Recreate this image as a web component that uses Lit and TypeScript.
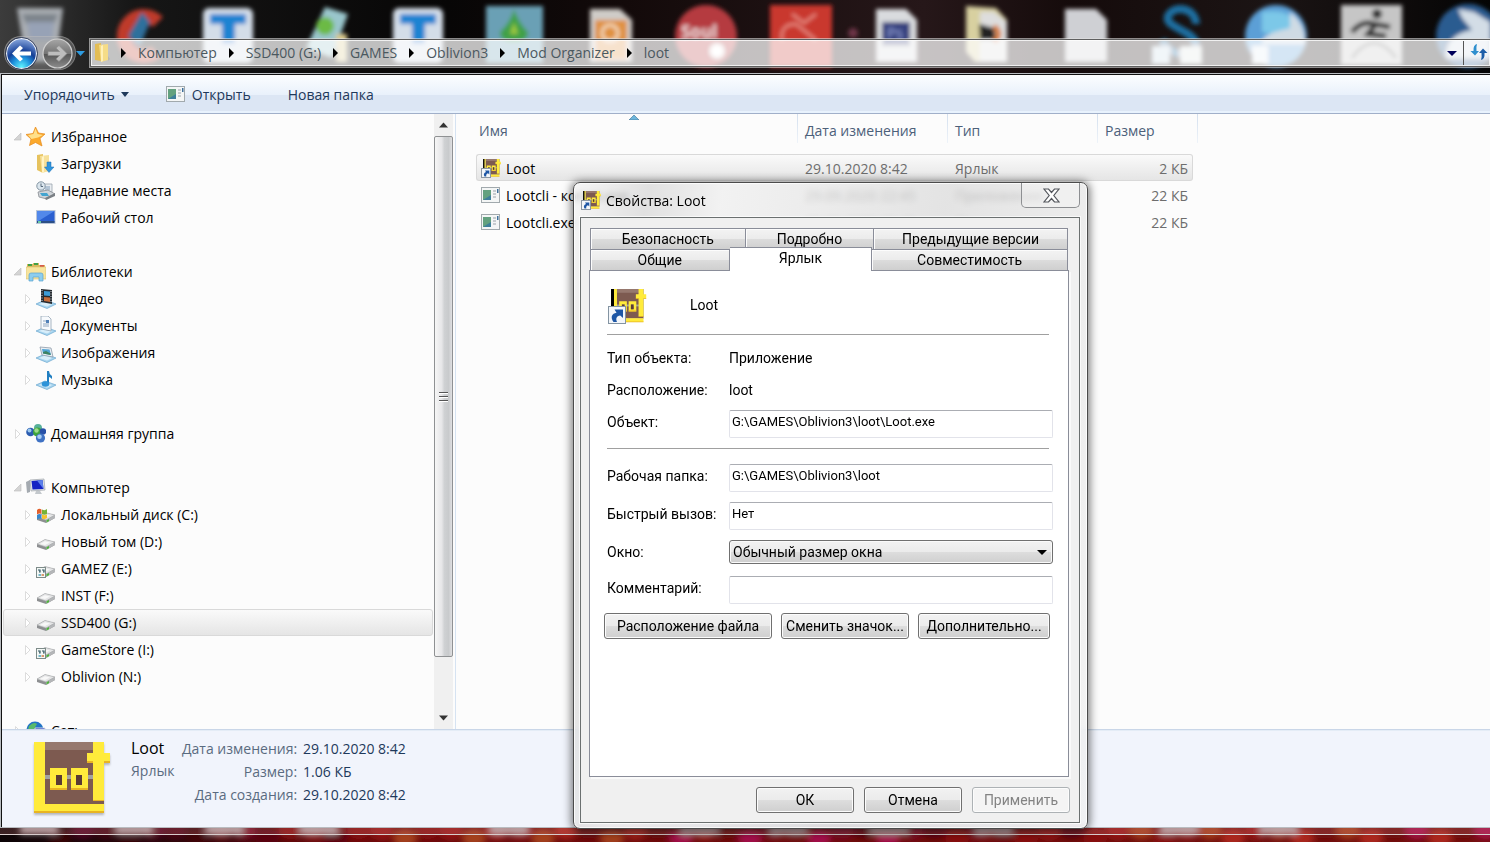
import { LitElement, html, css, svg, nothing } from "lit";
import { customElement, property } from "lit/decorators.js";
import { classMap } from "lit/directives/class-map.js";

const lootShapes = svg`
  <rect x="10" y="0" width="60" height="63" fill="#7d5a50"/>
  <rect x="10" y="0" width="50" height="8" fill="#96786e"/>
  <rect x="10" y="33" width="50" height="4" fill="#a3a3a0"/>
  <path d="M0 0H11V62H70V70H0Z" fill="#ffeb3b"/>
  <path d="M0 69H70V71H0ZM59 57H70V59H59Z" fill="#e8b423"/>
  <path d="M59 0H70V11H76V20H70V58H59V20H53V11H59Z" fill="#ffeb3b"/>
  <path d="M53 19H59V21H53ZM70 19H76V21H70Z" fill="#e8b423"/>
  <path fill-rule="evenodd" d="M16 26H33V48H16ZM22 33V43H28V33ZM37 26H54V48H37ZM42 33V43H48V33Z" fill="#ffeb3b"/>
  <path d="M16 46H33V48H16ZM37 46H54V48H37Z" fill="#e8b423"/>
  <path d="M22 33H28V43H22ZM42 33H48V43H42Z" fill="#5a3b34"/>`;

const drive = svg`
  <path d="M1 12L9 7.500L19 10V13L10 18L1 15Z" fill="#8d8f91"/>
  <path d="M1 12L9 7.500L19 10L10 15Z" fill="#e4e5e6" stroke="#a9abad" stroke-width=".6"/>
  <path d="M4 12L9 9.300L14 10.500L9 13Z" fill="#f8f8f8"/>
  <path d="M10 15L19 10V13L10 18Z" fill="#b4b6b8"/>
  <path d="M10.500 15.200L13 14V16L10.500 17.400Z" fill="#4db53a"/>`;

const plate = svg`
  <path d="M0 15L9 11L20 15L11 19.500Z" fill="#a9d5ef" stroke="#6ba7d0" stroke-width=".7"/>
  <path d="M3 15L9 12.500L16 15L11 17.500Z" fill="#d8eefa"/>`;

const icons: Record<string, unknown> = {
  star: svg`<path d="M9.500 0L12.500 6L19 7L14 11.500L16 19L9.500 15.500L3.500 18.500L5 12L0 7.500L7 6.500Z" fill="#fba92c" stroke="#e58a1d" stroke-width=".7"/><path d="M9.500 1.500L11.500 7L17 8L12 10.500L5.500 12L2 8L7.500 7Z" fill="#ffe08a"/>`,
  downloads: svg`<path d="M1 1L7 0V19L1 16Z" fill="#e6c25e"/><path d="M4 2L13 1V17L6 19Z" fill="#f6e09a"/><path d="M6 3L8 2V18L6 19Z" fill="#fff3c4"/><path d="M11 8H15V13H18L13 18.500L8.500 13H11Z" fill="#2f95dc" stroke="#1c6fb4" stroke-width=".5"/>`,
  recent: svg`<path d="M7 3H16V11H7Z" fill="#e9edf1" stroke="#9aa4ae" stroke-width=".8"/><path d="M9 6H14M9 8H14" stroke="#7d9bb8"/><circle cx="5" cy="5" r="4.200" fill="#dbe6ee" stroke="#8495a3"/><path d="M5 2.500V5.500H7" fill="none" stroke="#56697a"/><path d="M2 11L12 9L19 13L11 18L3 16Z" fill="#cfd4d9" stroke="#868c92" stroke-width=".8"/><path d="M4 12H11L13 15H6Z" fill="#44a4cf"/><path d="M9 17L19 12V15L10 19Z" fill="#7b8085"/>`,
  desktop: svg`<rect x="0" y="2" width="19.500" height="14" fill="#b8c5d8"/><rect x="1" y="3" width="17.500" height="11.500" fill="#2a5fd0"/><path d="M1 3H18.500L1 14Z" fill="#5288ea"/><rect x="1" y="13" width="17.500" height="2" fill="#2c4f86"/><rect x="2" y="13" width="3" height="2" fill="#6bcaa4"/>`,
  library: svg`<path d="M1 2H7V1H13V3H19V17H1Z" fill="#dab95f"/><path d="M2 3H6M8 2H12" stroke="#43a047" stroke-width="2"/><path d="M14 4H18" stroke="#d65a4a" stroke-width="2"/><path d="M0 5H20V17H0Z" fill="#f7e49e" stroke="#d9bf6c" stroke-width=".6"/><path d="M3 19V13Q3 11 5 11H15Q17 11 17 13V19H13V15H7V19Z" fill="#8dcdee" stroke="#5aa3cf" stroke-width=".7"/>`,
  video: svg`${plate}<path d="M5 0L16 1V15L5 13Z" fill="#262b30"/><path d="M8 2L14 2.500V7L8 6.500Z" fill="#3c9bd6"/><path d="M8 8L14 8.500V13L8 12Z" fill="#c46c3a"/><path d="M6 1V13M15 2V14" stroke="#cdd5db" stroke-dasharray="1 1.500"/>`,
  documents: svg`${plate}<path d="M5 0H12L15 3V15L5 13Z" fill="#f7fafd" stroke="#94a4b4" stroke-width=".8"/><path d="M7 5H10M7 8H13M7 10H13" stroke="#8da4be"/><path d="M10 4H13V7H10Z" fill="#4f7fb7"/>`,
  pictures: svg`${plate}<path d="M4 4L15 5L17 14L6 12Z" fill="#e9eff4" stroke="#8e9ba8" stroke-width=".8"/><path d="M6 6L13.500 6.500L15 12L7 10.500Z" fill="#4fa3d4"/><path d="M7 9L10 8L14.500 10.500V12L7 10.500Z" fill="#3c8261"/>`,
  music: svg`${plate}<path d="M11 1H13Q13 4 16 6V9Q14 7 13 7V14" fill="#217fc2"/><path d="M12 1V14" stroke="#217fc2" stroke-width="2"/><ellipse cx="9.500" cy="14" rx="3.800" ry="2.800" fill="#2d93d8"/>`,
  homegroup: svg`<circle cx="4.500" cy="8" r="4.300" fill="#2b5cb0"/><circle cx="3.500" cy="6.500" r="2" fill="#9cc8ee"/><circle cx="12" cy="4" r="4" fill="#57b09a"/><circle cx="11.500" cy="8" r="4.500" fill="#3fa53b"/><circle cx="10.500" cy="6.500" r="2.200" fill="#9fdc8b"/><circle cx="17" cy="7.500" r="3.200" fill="#2750a8"/><circle cx="14.500" cy="14" r="4.600" fill="#3f72c4"/><circle cx="13.500" cy="12.800" r="2.300" fill="#a8cdf3"/>`,
  computer: svg`<path d="M0 4L4 2V14L1 15Z" fill="#a4aab0"/><path d="M4 2L18 1L19 12L5 13Z" fill="#dfe3e7" stroke="#9da3a9" stroke-width=".7"/><path d="M5.500 3L16.500 2L17.500 11L6.500 11.500Z" fill="#1523c4"/><path d="M11 2.500L16.500 2L17.500 11Z" fill="#5c80ea"/><path d="M10 13H14L16 16H9Z" fill="#c3c8cc"/>`,
  system: svg`${drive}<path d="M1 5Q3 3 5.500 4.500V9Q3 8 1 9.500Z" fill="#e2602c"/><path d="M6 4.500Q9 6 11 4V9Q8.500 10.500 6 9Z" fill="#75b336"/><path d="M1 10Q3 8.500 5.500 9.500V14Q3 13 1 14.500Z" fill="#3787cc"/><path d="M6 9.500Q8.500 11 11 9.500V13Q8.500 15 6 13.500Z" fill="#f4c22e"/>`,
  drive,
  games: svg`${drive}<rect x=".5" y="8.500" width="9" height="10" fill="#f4f8f6" stroke="#7d8b89"/><path d="M2 11H4V13H3M6 11H8V13H7" fill="none" stroke="#2f5560" stroke-width="1.200"/><path d="M2.500 16H5" stroke="#48a0b8" stroke-width="1.500"/><path d="M5.500 16H8" stroke="#cf7a45" stroke-width="1.500"/>`,
  network: svg`<circle cx="9" cy="9" r="8.500" fill="#2374c6"/><path d="M3 5Q8 0 11 3Q8 7 9 10Q5 13 2 9Z" fill="#58b96a"/><path d="M9 7H19V16H9Z" fill="#1a33c4" stroke="#d5dce4"/>`,
  exe: svg`<rect x=".5" y="1.500" width="18" height="15" fill="#f4f6f6" stroke="#a1a9ad"/><rect x="2" y="4" width="8" height="10" fill="#3e7f9b"/><path d="M2 4H10V9L2 14Z" fill="#63a17f"/><path d="M12 5H15M12 8H15M12 11H15" stroke="#c7ccd0" stroke-width="2"/><rect x="16" y="3" width="1.500" height="4" fill="#3e6f9b"/>`,
  folder: svg`<path d="M1 1L7 0V18L1 17Z" fill="#e3bd55"/><path d="M5 2L14 1V17L7 19Z" fill="#f5dc87"/><path d="M7 3L9 2V18L7 19Z" fill="#fff0b8"/><path d="M14 13L16 16L14 18Z" fill="#b8b8b0"/>`,
  shortcut: svg`<g transform="translate(2 0) scale(.235 .25)">${lootShapes}</g><path d="M2 0H3.500V9H2Z" fill="#111"/><rect x=".5" y="9.500" width="9" height="9" fill="#f3f6f9" stroke="#8b97a3"/><path d="M3.500 17.500C2.200 15.500 3 13.500 5 13L4 11.500H8.300V15.500L7 14.300C5.300 14.800 5 16 5.300 17.500Z" fill="#1d56a5"/>`,
};

const icon = (name: string) => html`<svg class="icon" viewBox="0 0 20 20" aria-hidden="true">${icons[name]}</svg>`;

const iconStyles = css`
  .icon { width: 20px; height: 20px; flex: none; display: block; }
`;

/* Blurred desktop that shows through the glass of the window frame */
@customElement("desktop-wallpaper")
class DesktopWallpaper extends LitElement {
  static styles = css`
    :host { display: flex; flex-direction: column; justify-content: space-between; height: 100%; overflow: hidden; background: #120b0b; }
    svg { display: block; width: 100%; flex: none; }
    .top { height: 76px; }
    .bottom { height: 18px; }
  `;
  render() {
    const reds = ["#6d0a0c", "#9c1a14", "#7e0b2e", "#b02a1c", "#8a0e0e", "#a80f52", "#a8461c", "#5b0709"];
    const blobs = Array.from({ length: 64 }, (_, i) => {
      const x = 60 + i * 23;
      return svg`<ellipse cx=${x} cy=${i % 3 === 0 ? 14 : 6} rx="12" ry="9" fill=${reds[(i * 5 + (i >> 2)) % 8]} opacity=${x < 200 ? 0.35 : 0.9}/>`;
    });
    return html`
      <svg class="top" viewBox="0 0 1490 76" preserveAspectRatio="xMinYMin slice" aria-hidden="true">
        <defs>
          <filter id="soft" x="-5%" y="-20%" width="110%" height="140%"><feGaussianBlur stdDeviation="2.200"/></filter>
          <linearGradient id="sky"><stop offset="0" stop-color="#3c3c3c"/><stop offset=".09" stop-color="#161616"/><stop offset=".3" stop-color="#070606"/><stop offset=".42" stop-color="#130a0a"/><stop offset=".62" stop-color="#261719"/><stop offset=".72" stop-color="#150b0b"/><stop offset=".85" stop-color="#1b1414"/><stop offset="1" stop-color="#050505"/></linearGradient>
        </defs>
        <rect width="1490" height="76" fill="url(#sky)"/>
        <g filter="url(#soft)">
          <path d="M17 8H63L56 62H26Z" fill="#a9adb2"/><path d="M22 14H58L54 24H26Z" fill="#7d848b"/><path d="M27 22H54L52 40H30Z" fill="#97a2b6"/>
          <path d="M158 22A20 20 0 1 0 156 52" fill="none" stroke="#bf3a2b" stroke-width="14"/><path d="M128 36L142 12L150 22L140 46Z" fill="#2d6f9c"/>
          ${[203, 393].map((x) => svg`<rect x=${x} y="8" width="50" height="55" rx="6" fill="#d3dde8"/><path d=${`M${x + 7} 14H${x + 43}V24H${x + 32}V44H${x + 19}V24H${x + 7}Z`} fill="#1f83d2"/>`)}
          <path d="M325 7L348 14L332 58L306 48Z" fill="#9ac6cc"/><circle cx="325" cy="26" r="9" fill="#6cba45"/><path d="M336 34H347V62H336Z" fill="#d9c98c"/>
          <rect x="486" y="6" width="57" height="57" fill="#6aa0b5"/><path d="M514 9Q518 22 528 32Q528 42 514 42Q500 42 500 32Q511 22 514 9Z" fill="#3fa046"/><path d="M514 22L518 34H510Z" fill="#9fc93d"/>
          <path d="M590 9H620L632 20V62H590Z" fill="#cfccc8"/><rect x="595" y="20" width="32" height="40" fill="#e0913f"/><circle cx="610" cy="33" r="8" fill="none" stroke="#f3dcc0" stroke-width="3"/>
          <circle cx="706" cy="36" r="31" fill="#b53b40"/><text x="681" y="38" font-family="Open Sans, sans-serif" font-weight="700" font-size="17" fill="#f0dada">Soul</text><circle cx="717" cy="51" r="7" fill="#fff"/>
          <rect x="770" y="5" width="62" height="62" fill="#c9382e"/><path d="M792 14L804 23L816 14M782 40Q780 24 796 24L816 40" fill="none" stroke="#e98c82" stroke-width="2.500"/>
          <circle cx="853" cy="33" r="5" fill="#6d3446"/>
          <path d="M876 9H906L917 20V62H876Z" fill="#d9dbde"/><rect x="882" y="22" width="28" height="24" fill="#34407e"/><text x="887" y="38" font-family="Open Sans, sans-serif" font-size="15" fill="#9aa7e0">Ps</text>
          <path d="M966 6L996 8L1007 20V62H975L966 52Z" fill="#d8d0a0"/><path d="M980 12H994L1007 22V62H980Z" fill="#ddd"/><path d="M979 24L994 28L996 40H980Z" fill="#222"/><path d="M994 42Q1003 34 994 26" fill="none" stroke="#d9792f" stroke-width="5"/>
          <path d="M1065 9H1096L1107 20V62H1065Z" fill="#cfd0d4"/>
          <path d="M1196 24C1196 8 1174 4 1168 16C1164 28 1194 30 1196 44C1192 60 1170 56 1162 40" fill="none" stroke="#1c6ea0" stroke-width="8"/>
          <rect x="1152" y="46" width="18" height="18" fill="#c9dbe8"/><rect x="1180" y="46" width="22" height="18" fill="#dfe6e4"/>
          <circle cx="1276" cy="36" r="31" fill="#5b9fd6"/><path d="M1262 12Q1290 8 1296 24Q1280 38 1262 32Z" fill="#7cc8e8"/><path d="M1290 12Q1306 24 1305 44H1262Q1260 34 1290 28Z" fill="#cfdbe4"/><path d="M1252 46H1268V64H1252Z" fill="#e5eef5"/>
          <rect x="1341" y="5" width="61" height="60" fill="#c6c6c6"/><circle cx="1377" cy="14" r="5" fill="#2e2e2e"/><path d="M1352 32Q1362 20 1374 24L1390 27M1376 24L1368 34L1386 36" fill="none" stroke="#2e2e2e" stroke-width="5"/><path d="M1352 58Q1374 28 1396 58" fill="none" stroke="#555" stroke-width="3"/>
          <circle cx="1468" cy="36" r="32" fill="#2a5c90"/><path d="M1458 9L1474 12L1490 22V58H1446Q1446 34 1472 30L1462 18Z" fill="#d3dde6"/>
        </g>
      </svg>
      <svg class="bottom" viewBox="0 0 1490 18" preserveAspectRatio="xMinYMin slice" aria-hidden="true">
        <defs>
          <filter id="haze"><feGaussianBlur stdDeviation="3"/></filter>
          <linearGradient id="floor"><stop offset="0" stop-color="#0c0406"/><stop offset=".13" stop-color="#30060c"/><stop offset=".22" stop-color="#6c0a0c"/><stop offset="1" stop-color="#74100e"/></linearGradient>
        </defs>
        <rect width="1490" height="18" fill="url(#floor)"/>
        <g filter="url(#haze)">${blobs}
          ${[20, 115, 205, 300, 490, 680, 770, 870, 975, 1160, 1260].map((x) => svg`<rect x=${x} y="0" width="38" height="10" fill="#b5adb0"/>`)}
        </g>
      </svg>`;
  }
}

@customElement("address-bar")
class AddressBar extends LitElement {
  static styles = [iconStyles, css`
    :host { display: flex; align-items: center; height: 28px; margin-top: 39px; }
    button { border: 0; padding: 0; background: none; display: block; flex: none; }
    .history { display: flex; align-items: center; width: 86px; height: 34px; padding-left: 4px; flex: none; }
    .arrows { width: 70px; flex: none; height: 34px; display: flex; gap: 3px; align-items: center; padding: 0 1px; border-radius: 17px; background: rgba(170,170,170,.35); box-shadow: inset 0 0 0 1px rgba(200,200,200,.35); }
    .arrows svg { display: block; width: 33px; height: 33px; }
    .down { width: 9px; height: 5px; }
    .down svg, .drop svg { display: block; }
    .field { flex: 1; min-width: 0; height: 26px; display: flex; align-items: center; border: 1px solid #5f5f5f; outline: 1px solid rgba(225,225,225,.6); border-right: 0; background: rgba(255,255,255,.74); box-shadow: inset 0 0 0 1px rgba(255,255,255,.75); }
    .field .icon { margin-left: 3px; }
    ol { flex: 1; min-width: 0; display: flex; list-style: none; margin: 0; padding: 0; overflow: hidden; }
    li { display: flex; align-items: center; white-space: nowrap; }
    li::before { content: ""; border: 5px solid transparent; border-left: 5px solid #000; border-right: 0; margin: 0 12px; }
    li:first-child::before { margin-left: 7px; }
    a { color: #4b585f; text-decoration: none; }
    .drop { width: 16px; }
    .refresh { width: 27px; height: 24px; border-left: 1px solid #555; padding-left: 4px; }
  `];
  render() {
    const path = ["Компьютер", "SSD400 (G:)", "GAMES", "Oblivion3", "Mod Organizer", "loot"];
    return html`
      <div class="history">
        <div class="arrows">
          <button aria-label="Назад"><svg viewBox="0 0 33 33"><defs><radialGradient id="b" cx=".5" cy=".95" r=".9"><stop offset="0" stop-color="#5ff4ff"/><stop offset=".35" stop-color="#1c8fdc"/><stop offset=".6" stop-color="#153f96"/><stop offset="1" stop-color="#7d9cd6"/></radialGradient></defs><circle cx="16.500" cy="16.500" r="15" fill="url(#b)" stroke="#e6ecf5" stroke-width="1.300"/><circle cx="16.500" cy="16.500" r="16" fill="none" stroke="#16254a" stroke-width=".8"/><path d="M7 16.500L15 8.500L18 11L14.500 14.500H26V18.500H14.500L18 22L15 24.500Z" fill="#fff"/></svg></button>
          <button aria-label="Вперед"><svg viewBox="0 0 33 33"><defs><linearGradient id="f" x2="0" y2="1"><stop offset="0" stop-color="#a7a7a7"/><stop offset=".5" stop-color="#747474"/><stop offset=".52" stop-color="#555"/><stop offset="1" stop-color="#8d8d8d"/></linearGradient></defs><circle cx="16.500" cy="16.500" r="14.500" fill="url(#f)" stroke="#d0d0d0" stroke-width="1.200"/><path d="M26 16.500L18 8.500L15 11L18.500 14.500H7V18.500H18.500L15 22L18 24.500Z" fill="#bdbdbd" stroke="#8b8b8b" stroke-width=".7"/></svg></button>
        </div>
        <button class="down" aria-label="Последние страницы"><svg width="9" height="5" viewBox="0 0 9 5"><path d="M0 0H9L4.500 5Z" fill="#2e9be0"/></svg></button>
      </div>
      <div class="field">
        ${icon("folder")}
        <ol>${path.map((p) => html`<li><a href="#">${p}</a></li>`)}</ol>
        <button class="drop" aria-label="Предыдущие расположения"><svg width="10" height="5" viewBox="0 0 10 5"><path d="M0 0H10L5 5Z" fill="#00005a"/></svg></button>
        <button class="refresh" aria-label="Обновить"><svg width="18" height="18" viewBox="0 0 18 18"><path d="M7 1Q3 2 3.500 8H0.500L5 12.500L9 8H6.500Q6 4 7 1Z" fill="#2f8fce"/><path d="M11 17Q15 16 14.500 10H17.500L13 5.500L9 10H11.500Q12 14 11 17Z" fill="#1d5ea8"/></svg></button>
      </div>`;
  }
}

interface Node { name: string; icon: string; open?: boolean; leaf?: boolean; selected?: boolean; children?: Node[]; }

@customElement("folder-tree")
class FolderTree extends LitElement {
  static styles = [iconStyles, css`
    :host { display: flex; width: 451px; flex: none; border-right: 2px solid #fcfcfc; box-shadow: 1px 0 #d6e3f2; overflow: hidden; }
    nav { flex: 1; min-width: 0; padding: 9px 1px 0; overflow: hidden; }
    ul { list-style: none; margin: 0; padding: 0; }
    .root > li { margin-bottom: 27px; }
    a { display: flex; align-items: center; height: 27px; padding-left: 9px; color: #000; text-decoration: none; white-space: nowrap; box-sizing: border-box; border: 1px solid transparent; border-radius: 3px; }
    ul ul a { padding-left: 19px; }
    a .icon { margin-right: 5px; }
    .twist { width: 13px; height: 10px; flex: none; display: block; }
    .selected { border-color: #d9d9d9; background: linear-gradient(#fafafa, #e5e5e5); }
    .scroll { width: 19px; flex: none; display: flex; flex-direction: column; align-items: center; background: #f0f0f0; }
    .scroll > svg { display: block; height: 22px; width: 19px; flex: none; }
    .thumb { width: 17px; flex: 0 1 519px; border: 1px solid #8f9193; border-radius: 2px; background: linear-gradient(90deg, #f6f6f6, #e6e6e8 40%, #cfd1d3 55%, #c8cacc 80%, #e0e0e2); display: flex; align-items: center; justify-content: center; }
    .grip { width: 9px; height: 10px; background: repeating-linear-gradient(#555 0 1px, #fff 1px 2px, transparent 2px 4px); }
    .space { flex: 1; }
  `];
  row(n: Node): unknown {
    const tw = n.leaf ? nothing : n.open ? svg`<path d="M8 1V8H1Z" fill="#d4d4d4" stroke="#c2c2c2" stroke-width=".7"/>` : svg`<path d="M2.500 .5L7 5L2.500 9.500Z" fill="#fff" stroke="#dcdcdc"/>`;
    return html`<li><a href="#" class=${classMap({ selected: !!n.selected })}><svg class="twist" viewBox="0 0 13 10" aria-hidden="true">${tw}</svg>${icon(n.icon)}${n.name}</a>
      ${n.children ? html`<ul>${n.children.map((c) => this.row(c))}</ul>` : nothing}</li>`;
  }
  render() {
    const tree: Node[] = [
      { name: "Избранное", icon: "star", open: true, children: [
        { name: "Загрузки", icon: "downloads", leaf: true }, { name: "Недавние места", icon: "recent", leaf: true }, { name: "Рабочий стол", icon: "desktop", leaf: true }] },
      { name: "Библиотеки", icon: "library", open: true, children: [
        { name: "Видео", icon: "video" }, { name: "Документы", icon: "documents" }, { name: "Изображения", icon: "pictures" }, { name: "Музыка", icon: "music" }] },
      { name: "Домашняя группа", icon: "homegroup" },
      { name: "Компьютер", icon: "computer", open: true, children: [
        { name: "Локальный диск (C:)", icon: "system" }, { name: "Новый том (D:)", icon: "drive" }, { name: "GAMEZ (E:)", icon: "games" }, { name: "INST (F:)", icon: "drive" },
        { name: "SSD400 (G:)", icon: "drive", selected: true }, { name: "GameStore (I:)", icon: "games" }, { name: "Oblivion (N:)", icon: "drive" }] },
      { name: "Сеть", icon: "network" },
    ];
    return html`<nav><ul class="root">${tree.map((n) => this.row(n))}</ul></nav>
      <div class="scroll" aria-hidden="true">
        <svg viewBox="0 0 19 22"><path d="M5 13.500L9.500 8.500L14 13.500Z" fill="#333"/></svg>
        <div class="thumb"><div class="grip"></div></div><div class="space"></div>
        <svg viewBox="0 0 19 22"><path d="M5 8.500H14L9.500 13.500Z" fill="#333"/></svg>
      </div>`;
  }
}

@customElement("file-list")
class FileList extends LitElement {
  static styles = [iconStyles, css`
    :host { display: block; flex: 1; min-width: 0; overflow: hidden; padding-left: 21px; }
    table { border-collapse: separate; border-spacing: 0; table-layout: fixed; width: 717px; white-space: nowrap; }
    th { font-weight: 400; text-align: left; height: 34px; padding: 0 0 6px 8px; color: #4c607a; position: relative; }
    th:first-child { padding-left: 3px; }
    th::after { content: ""; position: absolute; right: -1px; top: 0; width: 1px; height: 29px; background: linear-gradient(#d3dfee, #eef3f9); }
    th:last-child::after { right: -5px; }
    .sort { position: absolute; left: 153px; top: 1px; width: 10px; height: 5px; }
    td { height: 23px; padding: 2px 0 0 8px; border: 1px solid transparent; border-width: 1px 0; color: #6d6d6d; }
    td:first-child { padding-left: 4px; color: #000; border-left-width: 1px; border-radius: 3px 0 0 3px; }
    td:last-child { text-align: right; padding-right: 4px; border-right-width: 1px; border-radius: 0 3px 3px 0; }
    .selected td { border-color: #d9d9d9; background: linear-gradient(#fafafa, #e5e5e5); }
    .name { display: flex; align-items: center; gap: 5px; }
    .c1 { width: 321px; } .c2 { width: 150px; } .c3 { width: 150px; }
  `];
  render() {
    const rows = [
      ["Loot", "29.10.2020 8:42", "Ярлык", "2 КБ", "shortcut"],
      ["Lootcli - копия.exe", "29.09.2020 22:45", "Приложение", "22 КБ", "exe"],
      ["Lootcli.exe", "29.09.2020 22:45", "Приложение", "22 КБ", "exe"],
    ];
    return html`<table>
      <colgroup><col class="c1"><col class="c2"><col class="c3"><col></colgroup>
      <thead><tr><th>Имя<svg class="sort" viewBox="0 0 10 5" aria-hidden="true"><path d="M0 5L5 0L10 5Z" fill="#6db6dc" stroke="#3b6f94" stroke-width=".6"/></svg></th><th>Дата изменения</th><th>Тип</th><th>Размер</th></tr></thead>
      <tbody>${rows.map((r, i) => html`<tr class=${classMap({ selected: i === 0 })}><td><span class="name">${icon(r[4])}${r[0]}</span></td><td>${r[1]}</td><td>${r[2]}</td><td>${r[3]}</td></tr>`)}</tbody>
    </table>`;
  }
}

@customElement("properties-dialog")
class PropertiesDialog extends LitElement {
  @property() name = "Loot";
  static styles = [iconStyles, css`
    :host { display: block; box-sizing: border-box; padding: 0 7px 5px 6px; border: 1px solid #4b4b4b; border-radius: 7px; background: linear-gradient(100deg, rgba(244,244,244,.72), rgba(214,214,214,.72) 12%, rgba(238,238,238,.72) 24%, rgba(218,218,218,.72) 60%, rgba(240,240,240,.72)); backdrop-filter: blur(3px); box-shadow: inset 0 0 0 1px rgba(255,255,255,.8), 0 1px 8px 2px rgba(0,0,0,.5); }
    header { display: flex; align-items: flex-start; height: 34px; }
    header .icon { margin: 8px 5px 0 1px; }
    h1 { margin: 8px 0 0; font: 400 14px/20px "Open Sans", sans-serif; flex: 1; color: #000; }
    .close { width: 59px; height: 25px; padding: 0 0 0 1px; border: 1px solid #8d8f92; border-top: 0; border-radius: 0 0 5px 5px; background: rgba(255,255,255,.25); display: flex; align-items: center; justify-content: center; }
    .close svg { display: block; }
    .client { border: 1px solid #6b7070; background: #f0f0f0; padding: 10px 10px 9px 8px; outline: 1px solid rgba(255,255,255,.7); font: 400 14px/16px var(--ui); }
    .row1, .row2 { display: grid; margin: 0 1px; }
    .row1 { grid-template-columns: 155fr 128fr 193fr; }
    .row2 { grid-template-columns: 139fr 142fr 195fr; align-items: end; }
    button, input, select { font: inherit; color: #000; box-sizing: border-box; }
    .tab { height: 21px; padding: 0; border: 1px solid #8a8d99; border-bottom: 0; border-radius: 0; background: linear-gradient(#f3f3f3, #ebebeb 50%, #dcdcdc 51%, #cfcfcf); box-shadow: inset 1px 1px #fcfcfc; }
    .tab + .tab { border-left: 0; }
    .row2 .active { height: 24px; margin: -2px 0 -1px; padding-bottom: 3px; background: #fff; position: relative; box-shadow: none; }
    .panel { border: 1px solid #8a8d99; background: #fff; min-height: 507px; padding: 18px 15px 0 17px; box-sizing: border-box; box-shadow: 2px 2px #fafafa; }
    .head { display: flex; align-items: center; height: 35px; padding-bottom: 10px; }
    .head svg { width: 40px; height: 38px; margin-right: 43px; display: block; }
    .head span { padding-bottom: 4px; }
    hr { border: 0; height: 1px; background: #a0a0a0; margin: 0 4px 0 0; }
    .line { display: grid; grid-template-columns: 122px 1fr; align-items: center; margin-top: 10px; }
    .line.text { height: 32px; margin: 0; }
    .first { padding-top: 7px; }
    .line.tight { margin-top: 4px; }
    .line.after { margin-top: 15px; }
    .line.wide { margin-top: 12px; }
    .sep { margin-top: 10px; }
    label { white-space: nowrap; padding-bottom: 4px; }
    .pick label { padding: 0; }
    input { width: 100%; height: 28px; border: 1px solid #e2e3ea; border-top-color: #abadb3; border-radius: 2px; padding: 0 2px 5px; background: #fff; font-size: 13px; }
    select { appearance: none; width: 100%; height: 24px; padding: 0 24px 0 3px; border: 1px solid #707070; border-radius: 3px; background: url("data:image/svg+xml,%3Csvg xmlns='http://www.w3.org/2000/svg' width='10' height='5'%3E%3Cpath d='M0 0H10L5 5Z'/%3E%3C/svg%3E") right 5px center no-repeat, linear-gradient(#f2f2f2, #ebebeb 50%, #dddddd 51%, #cfcfcf); box-shadow: inset 0 0 0 1px #fafafa; }
    .btn { height: 26px; padding: 0; border: 1px solid #707070; border-radius: 3px; background: linear-gradient(#f2f2f2, #ebebeb 50%, #dddddd 51%, #cfcfcf); box-shadow: inset 0 0 0 1px #fcfcfc; white-space: nowrap; }
    .btn:disabled { color: #838383; border-color: #adb2b5; background: #f4f4f4; }
    .actions { display: grid; grid-template-columns: 168fr 128fr 132fr; column-gap: 9px; margin: 9px 3px 0 -3px; }
    .foot { display: flex; justify-content: flex-end; gap: 10px; margin: 10px -1px 0 0; }
    .foot .btn { width: 98px; }
  `];
  render() {
    return html`
      <header>${icon("shortcut")}<h1>Свойства: ${this.name}</h1>
        <button class="close" aria-label="Закрыть"><svg width="17" height="15" viewBox="0 0 17 15"><path d="M1 1H5.500L8.500 4.500L11.500 1H16L10.800 7.500L16 14H11.500L8.500 10.500L5.500 14H1L6.200 7.500Z" fill="#fff" stroke="#53565c" stroke-width="1.200"/></svg></button>
      </header>
      <div class="client">
        <div role="tablist" class="row1"><button role="tab" class="tab">Безопасность</button><button role="tab" class="tab">Подробно</button><button role="tab" class="tab">Предыдущие версии</button></div>
        <div role="tablist" class="row2"><button role="tab" class="tab">Общие</button><button role="tab" aria-selected="true" class="tab active">Ярлык</button><button role="tab" class="tab">Совместимость</button></div>
        <div class="panel" role="tabpanel">
          <div class="head">
            <svg viewBox="0 0 40 38" aria-hidden="true"><g transform="translate(5 1) scale(.45 .47)">${lootShapes}</g><path d="M4 1H7V18H4Z" fill="#000"/><rect x="1.500" y="18.500" width="17" height="17" fill="#f3f6fa" stroke="#8494a2"/><path d="M6.500 34C3 29 5 25.500 9.500 24.800L7.500 21.500H16V30L13.200 27.500C9.500 28 8.500 30.500 10 34Z" fill="#1d56a5"/></svg>
            <span>${this.name}</span>
          </div>
          <hr>
          <div class="first">
            <div class="line text"><span>Тип объекта:</span><span>Приложение</span></div>
            <div class="line text"><span>Расположение:</span><span>loot</span></div>
          </div>
          <div class="line tight"><label for="target">Объект:</label><input id="target" value="G:\\GAMES\\Oblivion3\\loot\\Loot.exe"></div>
          <hr class="sep">
          <div class="line after"><label for="dir">Рабочая папка:</label><input id="dir" value="G:\\GAMES\\Oblivion3\\loot"></div>
          <div class="line"><label for="key">Быстрый вызов:</label><input id="key" value="Нет"></div>
          <div class="line pick"><label for="win">Окно:</label><select id="win"><option>Обычный размер окна</option></select></div>
          <div class="line wide"><label for="note">Комментарий:</label><input id="note"></div>
          <div class="actions"><button class="btn">Расположение файла</button><button class="btn">Сменить значок...</button><button class="btn">Дополнительно...</button></div>
        </div>
        <div class="foot"><button class="btn">ОК</button><button class="btn">Отмена</button><button class="btn" disabled>Применить</button></div>
      </div>`;
  }
}

@customElement("app-root")
class AppRoot extends LitElement {
  static styles = [iconStyles, css`
    :host { display: block; position: relative; height: 100vh; min-height: 842px; overflow: hidden; font: 400 14px/20px "Open Sans", "Noto Sans", sans-serif; --ui: "Roboto", "Liberation Sans", sans-serif; }
    desktop-wallpaper { position: absolute; inset: 0; }
    .window { position: relative; height: 100%; box-sizing: border-box; padding-bottom: 7px; display: flex; flex-direction: column; }
    .frame { flex: 1; min-height: 0; display: flex; flex-direction: column; border-bottom: 1px solid #d8cccc; background: linear-gradient(rgba(255,255,255,0), rgba(255,255,255,0) 90%, rgba(200,120,120,.25)); padding-bottom: 6px; }
    .client { flex: 1; min-height: 0; margin-top: 6px; border: 1px solid #b9bcc0; border-width: 1px 0 1px 1px; box-shadow: inset 1px 1px #111; padding: 2px 0 0 1px; display: flex; flex-direction: column; background: #fcfcfc; }
    .toolbar { display: flex; align-items: center; height: 37px; border-bottom: 1px solid #a0afc9; padding-left: 22px; background: linear-gradient(#fbfdff, #e9f1fb 50%, #dce6f4 51%, #dce6f4 94%, #e8f2fd 95%); }
    .toolbar button { display: flex; align-items: center; gap: 6px; padding: 0; border: 0; background: none; font: inherit; color: #1e395b; margin-right: 37px; }
    .body { flex: 1; min-height: 0; display: flex; }
    .details { display: flex; height: 98px; box-sizing: border-box; padding: 7px 0 0 32px; border-top: 1px solid #c9d6e8; box-shadow: inset 0 1px #e4ecf6; background: #f1f4fc; color: #5a6b80; flex: none; }
    .details .logo { width: 76px; height: 74px; margin: 5px 21px 0 0; overflow: visible; filter: drop-shadow(0 2px 1px rgba(0,0,0,.25)); display: block; flex: none; }
    .what { width: 51px; line-height: 23px; }
    .what h2 { margin: 0; font: 400 16px/22px "Open Sans", sans-serif; color: #000; }
    .what p { margin: 0; }
    dl { margin: 0; display: grid; grid-template-columns: max-content max-content; column-gap: 6px; align-content: start; line-height: 23px; }
    dt { text-align: right; } dd { margin: 0; color: #1e395b; }
    properties-dialog { position: absolute; left: 573px; top: 182px; width: 515px; }
  `];
  render() {
    return html`
      <desktop-wallpaper></desktop-wallpaper>
      <main class="window"><div class="frame">
        <address-bar></address-bar>
        <div class="client">
          <div class="toolbar">
            <button>Упорядочить <svg width="8" height="5" viewBox="0 0 8 5" aria-hidden="true"><path d="M0 0H8L4 5Z" fill="#1e395b"/></svg></button>
            <button>${icon("exe")}Открыть</button>
            <button>Новая папка</button>
          </div>
          <div class="body"><folder-tree></folder-tree><file-list></file-list></div>
          <div class="details">
            <svg class="logo" viewBox="0 0 76 74" aria-hidden="true">${lootShapes}</svg>
            <div class="what"><h2>Loot</h2><p>Ярлык</p></div>
            <dl><dt>Дата изменения:</dt><dd>29.10.2020 8:42</dd><dt>Размер:</dt><dd>1.06 КБ</dd><dt>Дата создания:</dt><dd>29.10.2020 8:42</dd></dl>
          </div>
        </div>
      </div></main>
      <properties-dialog></properties-dialog>`;
  }
}
